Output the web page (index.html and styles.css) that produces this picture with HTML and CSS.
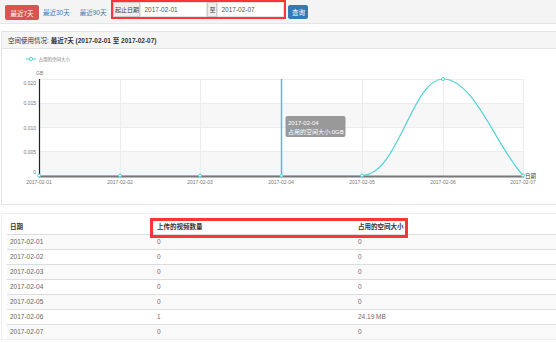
FILE: index.html
```html
<!DOCTYPE html>
<html lang="zh-cn">
  <head>
    <meta charset="UTF-8" />
    <meta name="viewport" content="width=device-width, initial-scale=1.0" />
    <title>空间使用情况</title>
    <link rel="stylesheet" href="styles.css">
  </head>
  <body>
    <div class="toolbar">
      <button class="btn btn-danger">最近7天</button>
      <a class="range-link" href="#">最近30天</a>
      <a class="range-link range-link-90" href="#">最近90天</a>
      <div class="date-group">
        <span class="addon addon-label">起止日期</span>
        <input class="date-input" type="text" value="2017-02-01" />
        <span class="addon addon-to">至</span>
        <input class="date-input" type="text" value="2017-02-07" />
      </div>
      <button class="btn btn-primary">查询</button>
    </div>

    <div class="panel">
      <div class="panel-heading">空间使用情况: <b>最近7天 (2017-02-01 至 2017-02-07)</b></div>
      <div class="chart-body">
        <svg class="chart" width="552" height="155" viewBox="0 0 552 155">
          <g transform="translate(-2,-49)">
            <!-- legend -->
            <line x1="26" y1="59" x2="36" y2="59" stroke="#50d2d8" stroke-width="1" />
            <circle cx="31" cy="59" r="1.6" fill="#fff" stroke="#50d2d8" stroke-width="1" />
            <text x="38.5" y="60.8" class="legend-text">占用的空间大小</text>
            <text x="36" y="75" class="axis-text">GB</text>

            <!-- grid -->
            <rect x="39" y="103" width="484" height="24" fill="#f7f7f7" />
            <rect x="39" y="151" width="484" height="25" fill="#f7f7f7" />
            <g stroke="#ececec" stroke-width="1">
              <line x1="39" y1="79.5" x2="523" y2="79.5" />
              <line x1="39" y1="103.5" x2="523" y2="103.5" />
              <line x1="39" y1="127.5" x2="523" y2="127.5" />
              <line x1="39" y1="151.5" x2="523" y2="151.5" />
              <line x1="120.5" y1="79" x2="120.5" y2="176" />
              <line x1="200.5" y1="79" x2="200.5" y2="176" />
              <line x1="362.5" y1="79" x2="362.5" y2="176" />
              <line x1="443.5" y1="79" x2="443.5" y2="176" />
              <line x1="523.5" y1="79" x2="523.5" y2="176" />
            </g>

            <!-- axes -->
            <line x1="39.5" y1="79" x2="39.5" y2="177" stroke="#222" stroke-width="1.2" />
            <line x1="39" y1="176.5" x2="524" y2="176.5" stroke="#777" stroke-width="2" />

            <g class="axis-text" text-anchor="end">
              <text x="36" y="84.5">0.020</text>
              <text x="36" y="105">0.015</text>
              <text x="36" y="129.5">0.010</text>
              <text x="36" y="153.5">0.005</text>
              <text x="36" y="174">0</text>
            </g>
            <g class="axis-text" text-anchor="middle">
              <text x="39" y="184">2017-02-01</text>
              <text x="120" y="184">2017-02-02</text>
              <text x="200" y="184">2017-02-03</text>
              <text x="281" y="184">2017-02-04</text>
              <text x="362" y="184">2017-02-05</text>
              <text x="443" y="184">2017-02-06</text>
              <text x="523" y="184">2017-02-07</text>
            </g>
            <text x="525" y="178" class="axis-label">日期</text>

            <!-- series -->
            <path d="M39,175.5 L362,175.5 C398,175.5 412,79 443,79 C474,79 496,146 523,175.5" fill="none" stroke="#50d2d8" stroke-width="1.2" />
            <line x1="281.5" y1="79" x2="281.5" y2="176" stroke="#5eb4e2" stroke-width="1.5" />
            <g fill="#fff" stroke="#50d2d8" stroke-width="1">
              <circle cx="39" cy="175.5" r="1.5" />
              <circle cx="120" cy="175.5" r="1.5" />
              <circle cx="200" cy="175.5" r="1.5" />
              <circle cx="281.5" cy="175.5" r="1.5" />
              <circle cx="362" cy="175.5" r="1.5" />
              <circle cx="443" cy="79" r="1.5" />
              <circle cx="523" cy="175.5" r="1.5" />
            </g>

            <!-- tooltip -->
            <rect x="285.5" y="116" width="60" height="21" rx="2" fill="#999" />
            <text x="288" y="124.5" class="tip-text">2017-02-04</text>
            <text x="288" y="133.5" class="tip-text">占用的空间大小:0GB</text>
          </g>
        </svg>
      </div>
    </div>

    <div class="panel table-panel">
      <div class="mark"></div>
      <table>
        <thead>
          <tr>
            <th class="col-date">日期</th>
            <th class="col-count">上传的视频数量</th>
            <th>占用的空间大小</th>
          </tr>
        </thead>
        <tbody>
          <tr><td>2017-02-01</td><td class="num">0</td><td class="num">0</td></tr>
          <tr><td>2017-02-02</td><td class="num">0</td><td class="num">0</td></tr>
          <tr><td>2017-02-03</td><td class="num">0</td><td class="num">0</td></tr>
          <tr><td>2017-02-04</td><td class="num">0</td><td class="num">0</td></tr>
          <tr><td>2017-02-05</td><td class="num">0</td><td class="num">0</td></tr>
          <tr><td>2017-02-06</td><td class="num">1</td><td class="num">24.19 MB</td></tr>
          <tr><td>2017-02-07</td><td class="num">0</td><td class="num">0</td></tr>
        </tbody>
      </table>
    </div>
  </body>
</html>
```

FILE: styles.css
```css
body {
  margin: 0;
  font-family: "Liberation Sans", "Noto Sans CJK SC", sans-serif;
  font-size: 6.5px;
  color: #333;
  background: #fff;
}
.toolbar {
  display: flex;
  align-items: flex-start;
  height: 23px;
  background: #f4f4f4;
  border-bottom: 1px solid #e6e6e6;
}
.btn {
  border: none;
  border-radius: 2px;
  font-family: inherit;
  font-size: 6.5px;
  color: white;
  padding: 0;
  cursor: pointer;
}
.btn-danger {
  margin: 5px 0 0 5px;
  width: 34px;
  height: 15px;
  background-color: #d9534f;
}
.btn-primary {
  margin: 5px 0 0 2px;
  width: 20px;
  height: 14px;
  background-color: #337ab7;
}
.range-link {
  margin: 9px 0 0 4px;
  color: #337ab7;
  text-decoration: none;
  line-height: 8px;
}
.range-link-90 {
  margin-left: 10px;
}
.date-group {
  display: flex;
  margin: 0 0 0 5px;
  border: 2px solid #ff3434;
  background: #fff;
}
.addon {
  height: 15px;
  line-height: 15px;
  background: #eee;
  color: #444;
  border: 1px solid #ccc;
  box-sizing: border-box;
  text-align: center;
  white-space: nowrap;
  font-size: 6px;
}
.addon-label {
  width: 27px;
}
.addon-to {
  width: 10px;
}
.date-input {
  width: 67px;
  height: 15px;
  box-sizing: border-box;
  border: 1px solid #e4e4e4;
  padding: 0 0 0 3px;
  margin: 0;
  font-family: inherit;
  font-size: 6.5px;
  color: #555;
}
.panel {
  position: relative;
  margin: 7px -2px 0 1px;
  border: 1px solid #e3e3e3;
  background: #fff;
}
.panel-heading {
  height: 16px;
  line-height: 17px;
  padding-left: 6px;
  background: #f5f5f5;
  border-bottom: 1px solid #e3e3e3;
  color: #333;
}
.chart-body {
  height: 155px;
}
.chart {
  display: block;
}
.legend-text {
  font-size: 4.5px;
  fill: #777;
}
.axis-text {
  font-size: 5px;
  fill: #777;
}
.axis-label {
  font-size: 5.5px;
  fill: #333;
}
.tip-text {
  font-size: 6px;
  fill: #fff;
}
.table-panel {
  margin-top: 8px;
  padding: 5px 0 0 5px;
  border-color: #efefef;
}
.mark {
  position: absolute;
  left: 148px;
  top: 4px;
  width: 258px;
  height: 20px;
  box-sizing: border-box;
  border: 3px solid #ff3434;
  pointer-events: none;
}
table {
  width: 100%;
  border-collapse: collapse;
}
th,
td {
  padding: 0 3px;
  text-align: left;
}
th {
  height: 15px;
  line-height: 15px;
  color: #333;
  border-bottom: 1px solid #ddd;
}
td {
  height: 14px;
  line-height: 14px;
  border-top: 1px solid #ddd;
  color: #666;
}
.col-date {
  width: 141px;
}
.col-count {
  width: 195px;
}
td.num {
  color: #7d6464;
}
tbody tr:nth-child(odd) {
  background-color: #f9f9f9;
}
```
